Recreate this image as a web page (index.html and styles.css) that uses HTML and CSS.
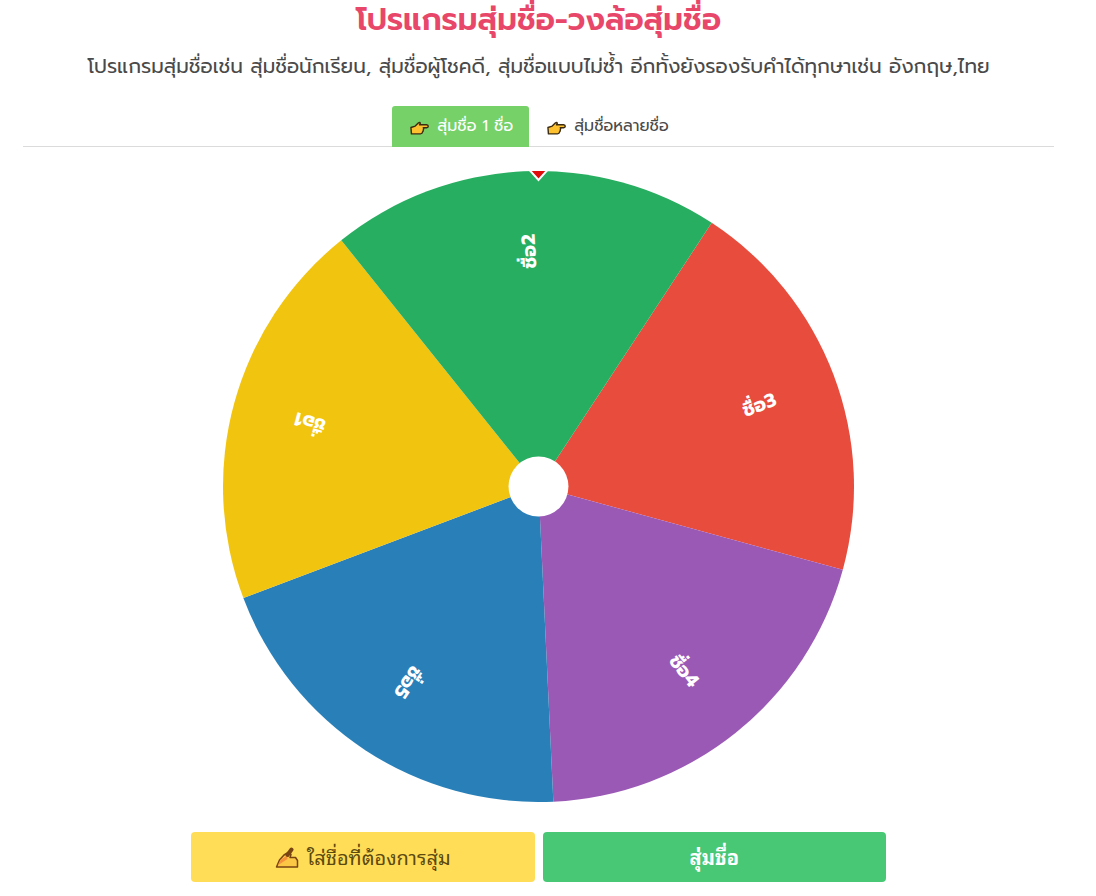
FILE: index.html
```html
<!DOCTYPE html>
<html lang="th">
<head>
    <meta charset="UTF-8">
    <meta name="viewport" content="width=device-width, initial-scale=1.0">
    <title>โปรแกรมสุ่มชื่อ-วงล้อสุ่มชื่อ</title>
    <link rel="stylesheet" href="styles.css">
</head>
<body>
    <main class="container">
        <h1 class="title">โปรแกรมสุ่มชื่อ-วงล้อสุ่มชื่อ</h1>
        <p class="subtitle">โปรแกรมสุ่มชื่อเช่น สุ่มชื่อนักเรียน, สุ่มชื่อผู้โชคดี, สุ่มชื่อแบบไม่ซ้ำ อีกทั้งยังรองรับคำได้ทุกษาเช่น อังกฤษ,ไทย</p>

        <nav class="tabs">
            <a class="tab active" href="#one">
                <svg class="hand" viewBox="0 0 20 16" aria-hidden="true"><path d="M1 7.5 5.5 6 9 2.5Q10.6 1.6 10.8 3.2L10 4.6H17.5Q19.2 4.8 19.2 6.2T17.5 7.8H14Q14.8 8.8 14 10 14.2 11.2 13.2 12.2 13 14 11 14.2H1.5Z"/></svg>
                <span>สุ่มชื่อ 1 ชื่อ</span>
            </a>
            <a class="tab" href="#many">
                <svg class="hand" viewBox="0 0 20 16" aria-hidden="true"><path d="M1 7.5 5.5 6 9 2.5Q10.6 1.6 10.8 3.2L10 4.6H17.5Q19.2 4.8 19.2 6.2T17.5 7.8H14Q14.8 8.8 14 10 14.2 11.2 13.2 12.2 13 14 11 14.2H1.5Z"/></svg>
                <span>สุ่มชื่อหลายชื่อ</span>
            </a>
        </nav>

        <svg class="wheel" viewBox="-316 -316 632 632" role="img" aria-label="วงล้อสุ่มชื่อ">
            <g id="slices"></g>
            <circle r="30" fill="#fff"/>
            <path class="pointer" d="M-9-317H9L0-307Z"/>
        </svg>

        <div class="buttons">
            <button class="btn btn-names" type="button">
                <svg class="writing" viewBox="0 0 24 22" aria-hidden="true">
                    <path class="writing-hand" d="M1.5 20 4.5 13 9 8 14 5 16 7.5 15 10.5H20.5L22.5 13.5V20Z"/>
                    <path class="writing-pen" d="M2.5 18.5 6 12.5 12 8.5 12.5 12Z"/>
                    <path class="writing-stick" d="M12.5 8 16.5 2.5"/>
                </svg>
                <span>ใส่ชื่อที่ต้องการสุ่ม</span>
            </button>
            <button class="btn btn-spin" type="button">สุ่มชื่อ</button>
        </div>
    </main>
    <script src="wheel.js"></script>
</body>
</html>
```
FILE: styles.css
```css
* {
    box-sizing: border-box;
}
body {
    margin: 0;
    padding: 0 42px 14px 23px;
    font-family: Prompt, Kanit, "Noto Sans Thai", "Noto Sans", sans-serif;
    background-color: #fff;
    color: #4a4a4a;
}
.title {
    margin: 0;
    font-size: 31px;
    line-height: 40px;
    font-weight: 600;
    text-align: center;
    color: #e8476a;
}
.subtitle {
    margin: 10px 0 24px;
    font-size: 20px;
    line-height: 32px;
    text-align: center;
}
.tabs {
    display: flex;
    justify-content: center;
    border-bottom: 1px solid #dbdbdb;
}
.tab {
    display: flex;
    align-items: center;
    gap: 8px;
    height: 41px;
    padding: 0 16px 2px 18px;
    margin-bottom: -1px;
    border-radius: 3px 3px 0 0;
    font-size: 16px;
    color: #4a4a4a;
    text-decoration: none;
}
.tab.active {
    background-color: #76d168;
    color: #fff;
}
.hand {
    width: 19px;
    height: 16px;
    margin-top: 4px;
    fill: #fdc02f;
    stroke: #3b2b12;
    stroke-width: 1.5;
    stroke-linejoin: round;
}
.wheel {
    display: block;
    width: 100%;
    max-width: 631px;
    margin: 24px auto 30px;
}
.name {
    fill: #fff;
    font-size: 19px;
    font-weight: bold;
    text-anchor: end;
}
.pointer {
    fill: #e00b0b;
    stroke: #fff;
    stroke-width: 2;
}
.buttons {
    display: flex;
    gap: 8px;
    max-width: 695px;
    margin: 0 auto;
}
.btn {
    display: flex;
    flex: 1;
    align-items: center;
    justify-content: center;
    gap: 8px;
    height: 50px;
    padding: 0 6px 2px;
    border: none;
    border-radius: 4px;
    font-family: Tahoma, "Noto Sans Thai Looped", "Noto Sans Thai", "Noto Sans", sans-serif;
    font-size: 20px;
    cursor: pointer;
}
.btn-names {
    background-color: #ffdd57;
    color: #5c4a10;
}
.btn-spin {
    background-color: #48c774;
    color: #fff;
    font-weight: bold;
}
.writing {
    width: 24px;
    height: 22px;
    margin-top: 4px;
    stroke: #7a4312;
    stroke-width: 1.5;
    stroke-linejoin: round;
}
.writing-hand {
    fill: #fdc746;
}
.writing-pen {
    fill: #f5913a;
    stroke: none;
}
.writing-stick {
    stroke-width: 4;
    stroke-linecap: round;
}
```
FILE: wheel.js
```js
const names = [
    { text: 'ชื่อ3', color: '#e74c3c' },
    { text: 'ชื่อ4', color: '#9b59b6' },
    { text: 'ชื่อ5', color: '#2980b9' },
    { text: 'ชื่อ1', color: '#f1c40f' },
    { text: 'ชื่อ2', color: '#27ae60' }
];
const radius = 316;
const step = 360 / names.length;
const startAngle = -56.7;
const svgNS = 'http://www.w3.org/2000/svg';
const slices = document.getElementById('slices');

function pointAt(angle) {
    const rad = angle * Math.PI / 180;
    return (radius * Math.cos(rad)) + ' ' + (radius * Math.sin(rad));
}

names.forEach((name, i) => {
    const from = startAngle + i * step;

    const slice = document.createElementNS(svgNS, 'path');
    slice.setAttribute('d', `M0 0L${pointAt(from)}A${radius} ${radius} 0 0 1 ${pointAt(from + step)}Z`);
    slice.setAttribute('fill', name.color);
    slices.appendChild(slice);

    // label reads from the hub outwards
    const label = document.createElementNS(svgNS, 'text');
    label.setAttribute('class', 'name');
    label.setAttribute('transform', `rotate(${from + step / 2})`);
    label.setAttribute('x', 253);
    label.setAttribute('y', 8);
    label.textContent = name.text;
    slices.appendChild(label);
});
```
